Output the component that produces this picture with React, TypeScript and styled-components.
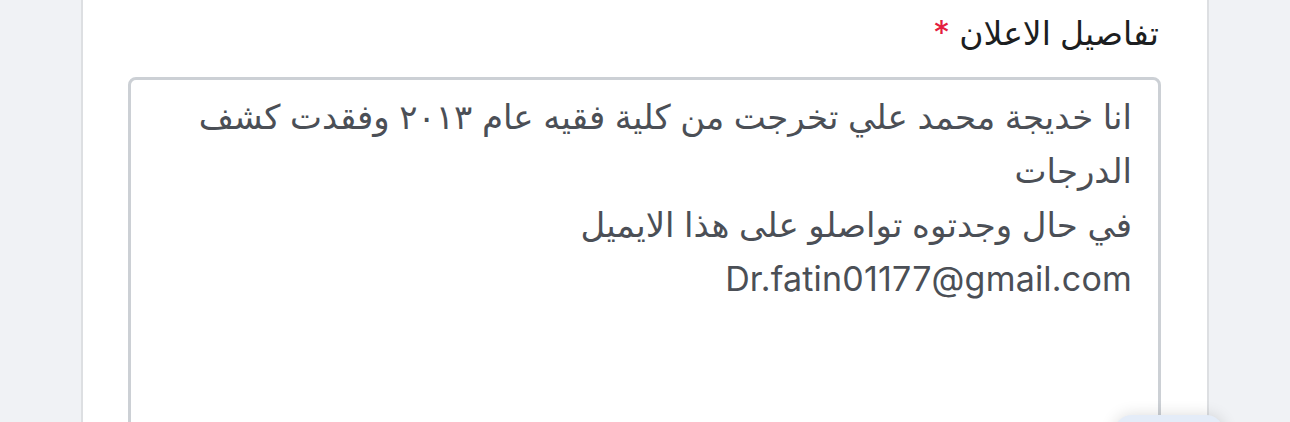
import { createGlobalStyle } from "styled-components";
import styled from "styled-components";

const GlobalStyle = createGlobalStyle`
  html, body {
    margin: 0;
    padding: 0;
    background-color: #f0f2f5;
    overflow: hidden;
  }
  body {
    font-family: "Inter", "DejaVu Sans", sans-serif;
  }
`;

const StyledPage = styled.div`
  height: 422px;
  padding: 0 81px;
  box-sizing: border-box;
`;

const StyledCard = styled.section`
  background-color: #ffffff;
  border: 2px solid #dddfe2;
  border-top: 0 none;
  border-bottom: 0 none;
  height: 100%;
  box-sizing: border-box;
  padding: 9px 46px 0 45px;
  display: flex;
  flex-direction: column;
  gap: 20px;
  overflow: hidden;
`;

const StyledLabel = styled.label`
  display: block;
  font-size: 33px;
  line-height: 48px;
  color: #1c1e21;
  padding-right: 2px;
`;

const StyledRequired = styled.span`
  color: #e41e3f;
  font-family: "Inter", sans-serif;
  font-size: 34px;
`;

const StyledTextArea = styled.textarea`
  display: block;
  width: 100%;
  height: 500px;
  flex-shrink: 0;
  box-sizing: border-box;
  resize: none;
  border: 3px solid #ccd0d5;
  border-radius: 8px;
  padding: 10px 26px 0 26px;
  font-family: "Inter", "DejaVu Sans", sans-serif;
  font-size: 34px;
  letter-spacing: 0.2px;
  line-height: 54px;
  color: #4b4f56;
  background-color: #ffffff;
  outline: none;
  overflow: hidden;
`;

const StyledFloatingButton = styled.div`
  position: fixed;
  left: 1114px;
  top: 415px;
  width: 110px;
  height: 64px;
  border-radius: 18px;
  background-color: #e4ecf8;
  box-shadow: 0 0 16px rgba(0, 0, 0, 0.14);
`;

const details = `انا خديجة محمد علي تخرجت من كلية فقيه عام ٢٠١٣ وفقدت كشف الدرجات
في حال وجدتوه تواصلو على هذا الايميل
Dr.fatin01177@gmail.com`;

export default function App() {
  return (
    <>
      <GlobalStyle />
      <StyledPage dir="rtl">
        <StyledCard>
          <StyledLabel htmlFor="details">
            تفاصيل الاعلان <StyledRequired>*</StyledRequired>
          </StyledLabel>
          <StyledTextArea id="details" dir="rtl" readOnly defaultValue={details} />
        </StyledCard>
      </StyledPage>
      <StyledFloatingButton />
    </>
  );
}
